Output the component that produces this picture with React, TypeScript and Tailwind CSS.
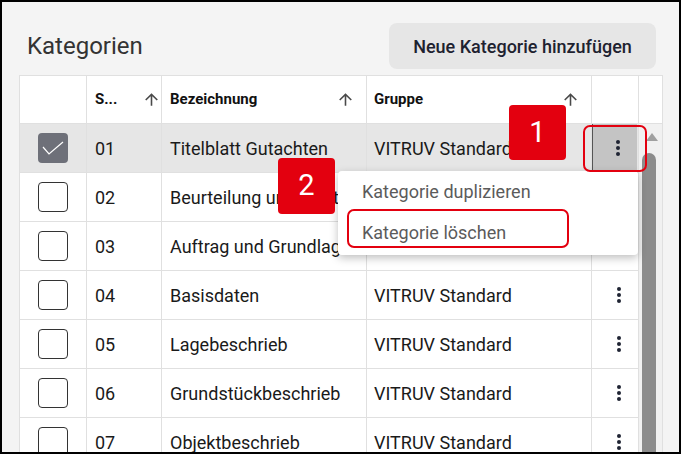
import { ReactNode } from "react";

type Row = { no: string; name: string; group: string; selected?: boolean };

const rows: Row[] = [
  { no: "01", name: "Titelblatt Gutachten", group: "VITRUV Standard", selected: true },
  { no: "02", name: "Beurteilung und Fazit", group: "VITRUV Standard" },
  { no: "03", name: "Auftrag und Grundlagen", group: "VITRUV Standard" },
  { no: "04", name: "Basisdaten", group: "VITRUV Standard" },
  { no: "05", name: "Lagebeschrieb", group: "VITRUV Standard" },
  { no: "06", name: "Grundstückbeschrieb", group: "VITRUV Standard" },
  { no: "07", name: "Objektbeschrieb", group: "VITRUV Standard" },
];

function ArrowUp() {
  return (
    <svg width="19" height="19" viewBox="0 0 24 24" className="shrink-0 fill-[#4a4a4a]">
      <path d="M4 12l1.41 1.41L11 7.83V20h2V7.83l5.58 5.59L20 12l-8-8-8 8z" />
    </svg>
  );
}

function MoreVert() {
  return (
    <svg width="24" height="24" viewBox="0 0 24 24" className="fill-[#1f2433]">
      <circle cx="12" cy="6" r="2" />
      <circle cx="12" cy="12" r="2" />
      <circle cx="12" cy="18" r="2" />
    </svg>
  );
}

function Checkbox({ checked }: { checked?: boolean }) {
  if (checked) {
    return (
      <div className="w-[30px] h-[30px] rounded-[4px] bg-[#6e7079]">
        <svg width="30" height="30" viewBox="0 0 30 30" fill="none">
          <polyline points="5,14 11,21 25,9" stroke="#fff" strokeWidth="1.2" />
        </svg>
      </div>
    );
  }
  return <div className="w-[30px] h-[30px] rounded-[4px] border border-[#333] bg-white" />;
}

function HeadCell({ children, className = "" }: { children?: ReactNode; className?: string }) {
  return (
    <div className={`flex shrink-0 items-center justify-between border-r border-[#e0e0e0] text-[15px] font-bold text-[#111] ${className}`}>
      {children}
    </div>
  );
}

export default function App() {
  return (
    <div className="relative w-[681px] h-[454px] overflow-hidden border-2 border-black bg-[#f4f4f4] font-['Roboto',sans-serif]">
      <div className="flex h-[73px] items-center justify-between pl-[25px] pr-[23px] pt-[21px] pb-[6px]">
        <h1 className="text-[24px] text-[#333]">Kategorien</h1>
        <button className="h-[46px] w-[267px] rounded-[8px] bg-[#e6e6e6] text-[18px] font-medium text-[#1e2230]">
          Neue Kategorie hinzufügen
        </button>
      </div>

      <div className="ml-[17px] w-[644px] border border-[#e0e0e0] bg-white">
        {/* column headers */}
        <div className="flex h-[48px] border-b border-[#e0e0e0]">
          <HeadCell className="w-[67px]" />
          <HeadCell className="w-[75px] pl-[8px]">
            <span>S...</span>
            <ArrowUp />
          </HeadCell>
          <HeadCell className="w-[205px] pl-[8px] pr-[11px]">
            <span>Bezeichnung</span>
            <ArrowUp />
          </HeadCell>
          <HeadCell className="w-[225px] pl-[7px] pr-[11px]">
            <span>Gruppe</span>
            <ArrowUp />
          </HeadCell>
          <HeadCell className="w-[47px]" />
          <div className="w-[23px]" />
        </div>

        <div className="flex">
          <div className="flex w-[619px] flex-col">
            {rows.map((r) => (
              <div
                key={r.no}
                className={`flex h-[49px] shrink-0 border-b border-[#e0e0e0] text-[18px] text-[#1a1a1a] ${
                  r.selected ? "bg-[#e6e6e6]" : ""
                }`}
              >
                <div className="flex w-[67px] items-center justify-center border-r border-[#e0e0e0] pr-[1px]">
                  <Checkbox checked={r.selected} />
                </div>
                <div className="flex w-[75px] items-center border-r border-[#e0e0e0] pl-[8px]">{r.no}</div>
                <div className="flex w-[205px] items-center overflow-hidden whitespace-nowrap border-r border-[#e0e0e0] pl-[8px]">
                  {r.name}
                </div>
                <div className="flex w-[225px] items-center overflow-hidden whitespace-nowrap border-r border-[#e0e0e0] pl-[7px]">
                  {r.group}
                </div>
                <div className="flex w-[47px] items-center border-r border-[#e0e0e0]">
                  {r.selected ? (
                    <div className="flex h-[47px] w-[45px] self-start items-center justify-center border-l border-[#555] bg-[#c4c4c4] pl-[6px]">
                      <MoreVert />
                    </div>
                  ) : (
                    <div className="flex w-full justify-center pl-[8px]">
                      <MoreVert />
                    </div>
                  )}
                </div>
              </div>
            ))}
          </div>

          {/* scrollbar */}
          <div className="flex w-[23px] flex-col items-center bg-[#f1f1f1] pt-[9px]">
            <div className="ml-[2px] h-0 w-0 border-x-[6px] border-b-[8px] border-x-transparent border-b-[#a0a0a0]" />
            <div className="mt-[12px] mr-[3px] h-[320px] w-[14px] rounded-t-[7px] bg-[#8c8c8c]" />
          </div>
        </div>
      </div>

      {/* context menu */}
      <div className="absolute left-[336px] top-[169px] w-[300px] rounded-[4px] bg-white text-[18px] text-[#5b5b5b] shadow-[0_3px_8px_rgba(0,0,0,0.25)]">
        <div className="flex h-[41px] items-center pl-[24px]">Kategorie duplizieren</div>
        <div className="flex h-[41px] items-center pl-[24px]">Kategorie löschen</div>
        <div className="h-[2px]" />
      </div>

      {/* step markers */}
      <div className="absolute left-[581px] top-[123px] h-[47px] w-[64px] rounded-[7px] border-2 border-[#e3000f]" />
      <div className="absolute left-[345px] top-[207px] h-[39px] w-[222px] rounded-[7px] border-2 border-[#e3000f]" />
      <div className="absolute left-[507px] top-[103px] flex h-[55px] w-[57px] items-center justify-center rounded-[4px] bg-[#e3000f] text-[29px] text-white">
        1
      </div>
      <div className="absolute left-[276px] top-[156px] flex h-[56px] w-[57px] items-center justify-center rounded-[4px] bg-[#e3000f] text-[29px] text-white">
        2
      </div>
    </div>
  );
}
